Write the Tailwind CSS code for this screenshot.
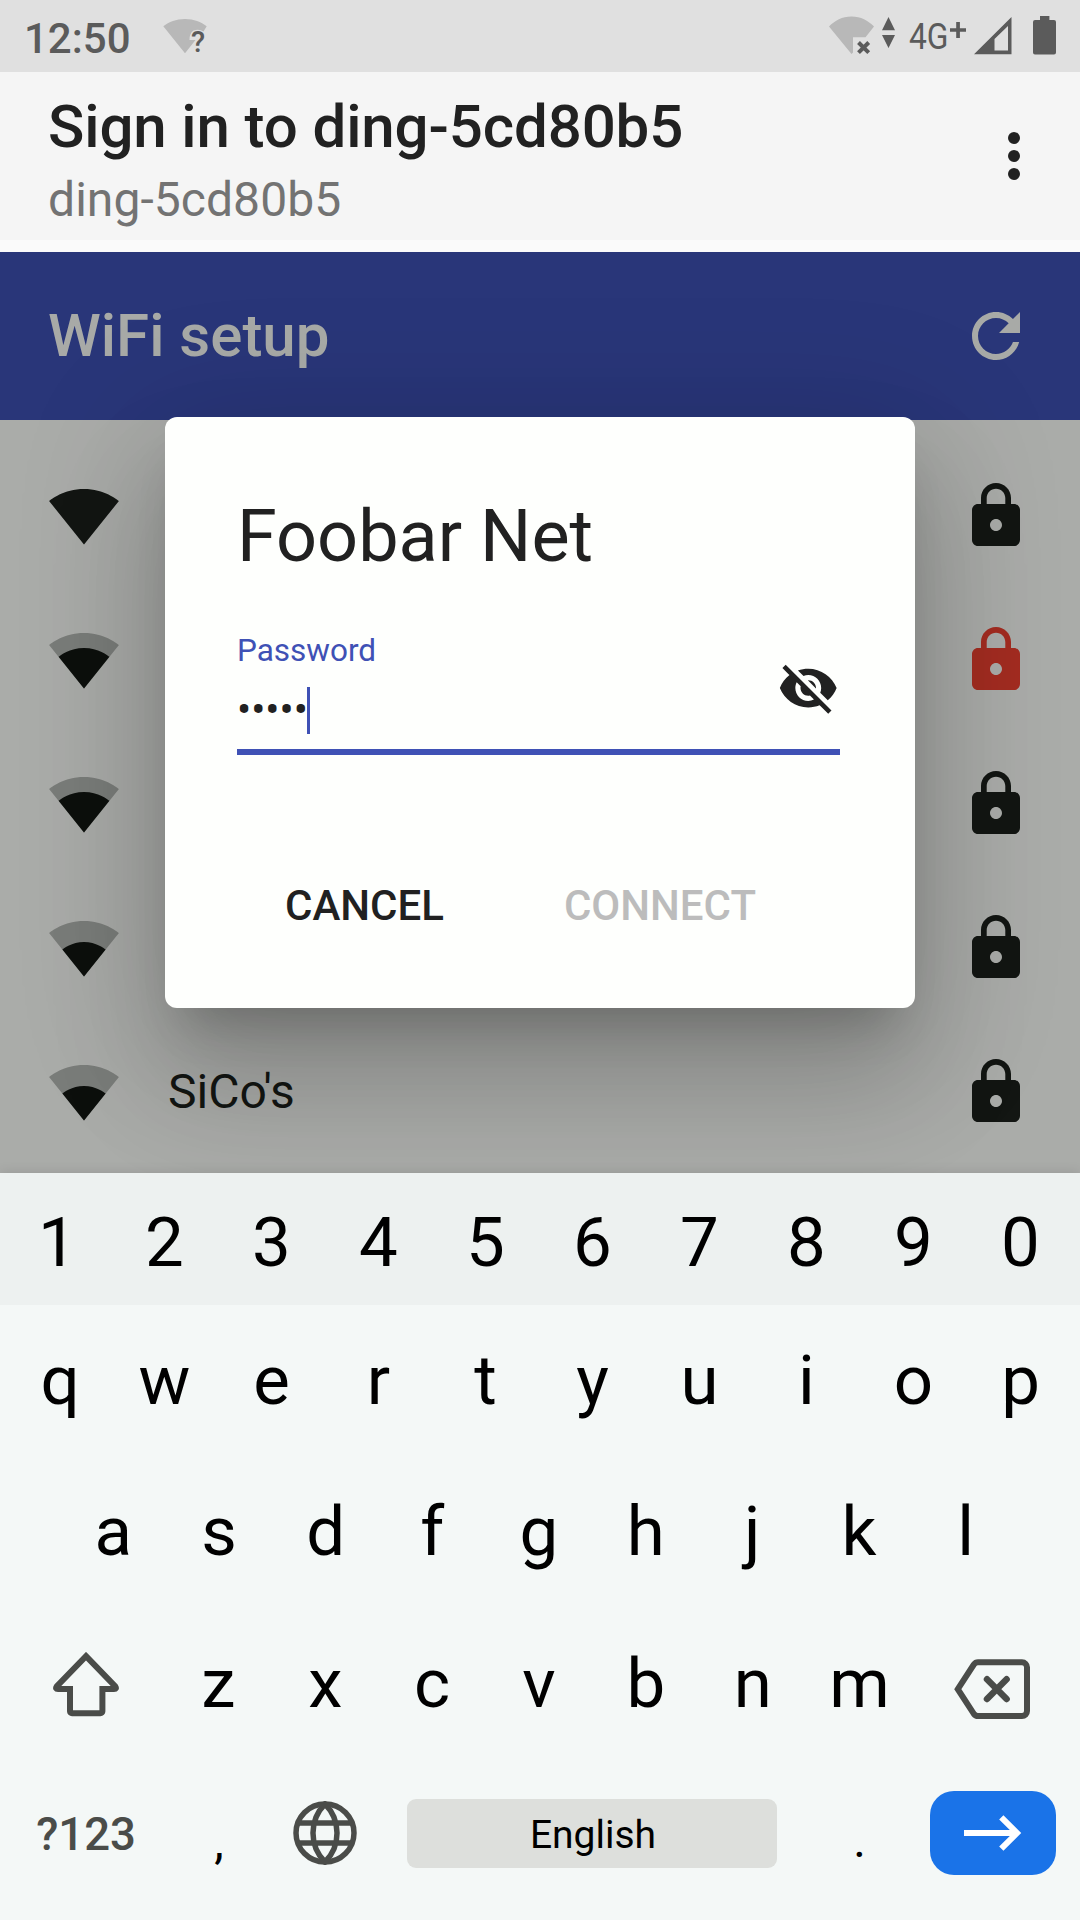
<!DOCTYPE html>
<html lang="en">
<head>
<meta charset="utf-8">
<title>Sign in to ding-5cd80b5</title>
<script src="https://cdn.jsdelivr.net/npm/@tailwindcss/browser@4"></script>
</head>
<body class="bg-[#f4f8f7] font-['Roboto',sans-serif]">
<svg class="hidden">
  <symbol id="wifi-full" viewBox="0 0 24 24"><path d="M12.01 21.49L23.64 7c-.45-.34-4.93-4-11.64-4C5.28 3 .81 6.66.36 7l11.63 14.49.01.01.01-.01z"/></symbol>
  <symbol id="wifi-3" viewBox="0 0 24 24"><path fill-opacity=".3" d="M12.01 21.49L23.64 7c-.45-.34-4.93-4-11.64-4C5.28 3 .81 6.66.36 7l11.63 14.49.01.01.01-.01z"/><path d="M3.53 10.95l8.46 10.54.01.01.01-.01 8.46-10.54C20.04 10.62 16.81 8 12 8c-4.81 0-8.04 2.62-8.47 2.95z"/></symbol>
  <symbol id="wifi-2" viewBox="0 0 24 24"><path fill-opacity=".3" d="M12.01 21.49L23.64 7c-.45-.34-4.93-4-11.64-4C5.28 3 .81 6.66.36 7l11.63 14.49.01.01.01-.01z"/><path d="M4.79 12.52l7.2 8.98H12l.01-.01 7.2-8.98C18.85 12.24 16.1 10 12 10s-6.85 2.24-7.21 2.52z"/></symbol>
  <symbol id="lock" viewBox="0 0 24 24"><path d="M18 8h-1V6c0-2.76-2.24-5-5-5S7 3.24 7 6v2H6c-1.1 0-2 .9-2 2v10c0 1.1.9 2 2 2h12c1.1 0 2-.9 2-2V10c0-1.1-.9-2-2-2zm-6 9c-1.1 0-2-.9-2-2s.9-2 2-2 2 .9 2 2-.9 2-2 2zm3.1-9H8.9V6c0-1.71 1.39-3.1 3.1-3.1 1.71 0 3.1 1.39 3.1 3.1v2z"/></symbol>
</svg>
<div class="relative flex h-[1920px] w-[1080px] flex-col overflow-hidden">

  <!-- Status bar -->
  <div class="flex h-[72px] shrink-0 items-center justify-between bg-[#e0e0e0] pl-[24px] text-[#5b5b5b]">
    <div class="flex items-center">
      <div class="w-[107px] pt-[5px] text-[42px] leading-none font-medium">12:50</div>
      <svg class="ml-[29px] h-[72px] w-[52px]" viewBox="160 0 52 72">
        <path fill="#b8b8b8" d="M185 53.3L163.3 26.3C169 22 176 19 185 19s16 3 21.7 7.3L203.500 31.500Q199 28.500 193.500 30.500Q189.500 33 189.500 40H195.500z"/>
        <text x="191" y="52" font-size="29" font-weight="500" fill="#5b5b5b">?</text>
      </svg>
    </div>
    <svg class="h-[72px] w-[260px]" viewBox="820 0 260 72" fill="#5b5b5b">
      <path fill="#b8b8b8" d="M851.500 54L829 26.500C835 20.500 842 16.500 851.500 16.500S868 20.500 874 26.500L865.500 37.300H853V52.500z"/>
      <path d="M858.500 42.500L868.700 52.700M868.700 42.500L858.500 52.700" stroke="#5b5b5b" stroke-width="4"/>
      <path d="M888.500 17L895 30.200H882zM888.500 48L895 35H882z"/>
      <text x="909" y="49" font-size="37.500" textLength="39.500" lengthAdjust="spacingAndGlyphs">4G</text>
      <path d="M950 28.200h16v3.600h-16zM956.200 22h3.700v16h-3.700z"/>
      <path fill-rule="evenodd" d="M974 54.300L1011.500 17V54.300zM994.500 39V50.500H1008V26z"/>
      <path d="M1040 16h9.400v4h4.600a2 2 0 0 1 2 2v30.600a2 2 0 0 1-2 2h-19a2 2 0 0 1-2-2v-30.600a2 2 0 0 1 2-2h5z"/>
    </svg>
  </div>

  <!-- App bar -->
  <div class="flex h-[168px] shrink-0 justify-between bg-[#f5f5f5] pr-[60px] pl-12">
    <div>
      <div class="mt-[25px] text-[60px] leading-[60px] font-medium tracking-[-0.12px] text-[#212121]">Sign in to ding-5cd80b5</div>
      <div class="mt-[14px] text-[48px] leading-[57px] tracking-[0.06px] text-[#737373]">ding-5cd80b5</div>
    </div>
    <div class="mt-[60px] flex flex-col gap-[6px]">
      <div class="size-3 rounded-full bg-[#212121]"></div>
      <div class="size-3 rounded-full bg-[#212121]"></div>
      <div class="size-3 rounded-full bg-[#212121]"></div>
    </div>
  </div>
  <div class="h-3 shrink-0 bg-[#fafafa]"></div>

  <!-- Page header -->
  <div class="flex h-[168px] shrink-0 items-center justify-between bg-[#293679] px-12 text-[#a8aaa7]">
    <div class="text-[60px] leading-none font-medium">WiFi setup</div>
    <svg class="size-[72px] fill-current" viewBox="0 0 24 24"><path d="M17.65 6.35C16.2 4.9 14.21 4 12 4c-4.42 0-7.99 3.58-7.99 8s3.57 8 7.99 8c3.73 0 6.84-2.55 7.73-6h-2.08c-.82 2.33-3.04 4-5.65 4-3.31 0-6-2.69-6-6s2.69-6 6-6c1.66 0 3.14.69 4.22 1.78L13 11h7V4l-2.350 2.350z"/></svg>
  </div>

  <!-- Network list -->
  <div class="flex h-[753px] shrink-0 flex-col bg-[#aaaca9] pt-6 text-[#131613]">
    <div class="flex h-36 items-center justify-between px-12"><svg class="size-[72px] fill-current"><use href="#wifi-full"/></svg><svg class="size-[72px] fill-current"><use href="#lock"/></svg></div>
    <div class="flex h-36 items-center justify-between px-12"><svg class="size-[72px] fill-[#0d100d]"><use href="#wifi-3"/></svg><svg class="size-[72px] fill-[#a32c21]"><use href="#lock"/></svg></div>
    <div class="flex h-36 items-center justify-between px-12"><svg class="size-[72px] fill-[#0d100d]"><use href="#wifi-3"/></svg><svg class="size-[72px] fill-current"><use href="#lock"/></svg></div>
    <div class="flex h-36 items-center justify-between px-12"><svg class="size-[72px] fill-[#0d100d]"><use href="#wifi-2"/></svg><svg class="size-[72px] fill-current"><use href="#lock"/></svg></div>
    <div class="flex h-36 items-center px-12"><svg class="size-[72px] fill-[#0d100d]"><use href="#wifi-2"/></svg><div class="ml-12 grow text-[48px] leading-none">SiCo's</div><svg class="size-[72px] fill-current"><use href="#lock"/></svg></div>
  </div>

  <!-- Password dialog -->
  <div class="absolute top-[252px] left-0 h-[921px] w-full overflow-hidden">
    <div class="mx-auto mt-[165px] flex h-[591px] w-[750px] flex-col rounded-xl bg-[#fefffd] px-[72px] pt-[72px] text-[#212121] shadow-[0_33px_45px_-21px_rgba(0,0,0,0.2),0_72px_114px_9px_rgba(0,0,0,0.14),0_27px_138px_24px_rgba(0,0,0,0.12)]">
      <div class="text-[72px] leading-[96px]">Foobar Net</div>
      <div class="mt-[48px] flex h-[122px] w-[603px] justify-between border-b-[6px] border-[#3f51b5]">
        <div>
          <div class="text-[31.500px] leading-[36px] text-[#3f51b5]">Password</div>
          <div class="mt-[18px] flex items-center">
            <div class="h-[47px] pr-px text-[42px] leading-[45px]">•••••</div>
            <div class="-ml-[2px] h-[47px] w-[3px] bg-[#3f51b5]"></div>
          </div>
        </div>
        <svg class="mt-[24px] mr-px h-[62px] w-[62.500px] fill-current" viewBox="0 0 24 24"><path d="M12 7c2.760 0 5 2.240 5 5 0 .65-.13 1.260-.36 1.830l2.920 2.920c1.510-1.260 2.700-2.890 3.430-4.750-1.730-4.390-6-7.500-11-7.500-1.400 0-2.740.25-3.980.7l2.160 2.160C10.740 7.130 11.350 7 12 7zM2 4.270l2.280 2.280.46.46C3.080 8.300 1.780 10.020 1 12c1.730 4.390 6 7.500 11 7.500 1.550 0 3.030-.3 4.380-.84l.42.42L19.730 22 21 20.730 3.270 3 2 4.270zM7.530 9.800l1.550 1.550c-.05.21-.08.43-.08.65 0 1.660 1.340 3 3 3 .22 0 .44-.03.65-.08l1.550 1.550c-.67.33-1.410.53-2.200.53-2.760 0-5-2.240-5-5 0-.79.2-1.530.53-2.200zm4.310-.78l3.150 3.150.02-.16c0-1.660-1.340-3-3-3l-.17.01z"/></svg>
      </div>
      <div class="mt-[97px] flex gap-6 text-[42px] leading-[108px] font-medium">
        <div class="px-12">CANCEL</div>
        <div class="px-12 text-[#bcbcbc]">CONNECT</div>
      </div>
    </div>
  </div>

  <!-- Keyboard -->
  <div class="relative flex grow flex-col bg-[#f4f8f7] text-center text-[69px] leading-none text-black shadow-[0_0_12px_rgba(0,0,0,0.12)]">
    <div class="grid h-[132px] grid-cols-10 items-center bg-[#edf1f0] pt-[7px] pr-[6px] pl-[4px]">
      <div>1</div><div>2</div><div>3</div><div>4</div><div>5</div><div>6</div><div>7</div><div>8</div><div>9</div><div>0</div>
    </div>
    <div class="grid h-[151px] grid-cols-10 items-center pr-[6px] pl-[4px]">
      <div class="pl-[5px]">q</div><div>w</div><div>e</div><div>r</div><div>t</div><div>y</div><div>u</div><div>i</div><div>o</div><div>p</div>
    </div>
    <div class="grid h-[151px] grid-cols-9 items-center pr-[61px] pl-[59px]">
      <div class="pl-[2px]">a</div><div>s</div><div>d</div><div>f</div><div>g</div><div>h</div><div>j</div><div>k</div><div>l</div>
    </div>
    <div class="flex h-[151px] items-center">
      <svg class="mt-[5px] ml-[52px] h-[66px] w-[68px] shrink-0" viewBox="0 0 68 66" fill="none" stroke="#4a4c49" stroke-width="6"><path d="M34 4.200L63.300 34.500Q65 37 62 37H50.400V59.200a2 2 0 0 1-2 2H20a2 2 0 0 1-2-2V37H6Q3 37 4.700 34.500z"/></svg>
      <div class="mt-px ml-[45px] grid w-[748px] grid-cols-7">
        <div>z</div><div>x</div><div>c</div><div>v</div><div>b</div><div>n</div><div>m</div>
      </div>
      <svg class="mt-[13px] ml-[41px] h-[60px] w-[76px] shrink-0" viewBox="954 1659 76 60" fill="none" stroke="#4a4c49" stroke-width="6"><path d="M957.800 1689.200L973.800 1664.500Q975.500 1662.300 978 1662.300H1022a5 5 0 0 1 5 5V1711a5 5 0 0 1-5 5H978Q975.500 1716 973.800 1713.800z"/><path stroke-width="6.500" stroke-linecap="round" d="M987 1679.300L1006.600 1699M1006.600 1679.300L987 1699"/></svg>
    </div>
    <div class="flex grow items-center pb-[12px]">
      <div class="w-[172px] pt-[3px] text-[45.500px] font-medium text-[#4a4c49]">?123</div>
      <div class="w-[94px] pt-[17px] text-[48px]">,</div>
      <svg class="ml-[27px] size-[64px] shrink-0" viewBox="-32 -32 64 64" fill="none" stroke="#4a4c49" stroke-width="5.500"><circle r="29"/><path d="M0-29A41 41 0 0 1 0 29A41 41 0 0 1 0-29zM-27-10H27M-27 10H27"/></svg>
      <div class="ml-[50px] h-[69px] w-[370px] rounded-[9px] bg-[#dddfdc] pl-[2px] text-[39px] leading-[73px]">English</div>
      <div class="w-[153px] pt-[15px] pl-[12px] text-[48px]">.</div>
      <div class="flex h-[84px] w-[126px] items-center justify-center rounded-[24px] bg-[#1a73e8]">
        <svg class="h-[40px] w-[60px]" viewBox="963 1813 60 40" fill="none" stroke="#fff" stroke-width="6"><path d="M964 1833H1016M1001.300 1817.300L1017 1833L1001.300 1848.700"/></svg>
      </div>
    </div>
  </div>
</div>
</body>
</html>
